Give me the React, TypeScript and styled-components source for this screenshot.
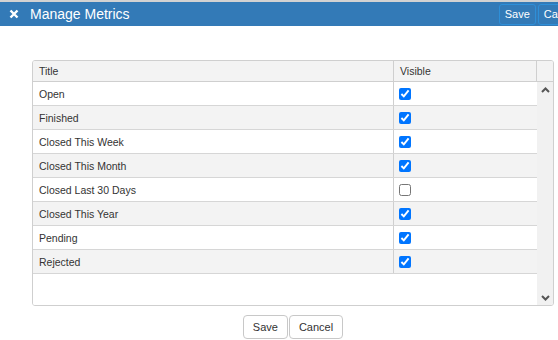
import React from 'react';
import styled, { createGlobalStyle } from 'styled-components';

const GlobalStyle = createGlobalStyle`
  html, body {
    margin: 0;
    padding: 0;
    background: #fff;
  }
  body {
    font-family: "Liberation Sans", Arial, sans-serif;
    color: #333;
    overflow: hidden;
  }
`;

const Page = styled.div`
  width: 558px;
  height: 340px;
  overflow: hidden;
  border-top: 2px solid #d2d2d2;
  box-sizing: border-box;
`;

const TitleBar = styled.div`
  display: flex;
  align-items: center;
  height: 24px;
  background: #337ab7;
  color: #fff;
  padding-left: 9px;
`;

const CloseIcon = styled.span`
  display: inline-flex;
  width: 10px;
  height: 10px;
  margin-right: 11px;
`;

const TitleText = styled.div`
  flex: 1;
  min-width: 0;
  font-size: 14px;
  line-height: 24px;
  white-space: nowrap;
`;

const HeaderActions = styled.div`
  display: flex;
  gap: 2px;
  flex-shrink: 0;
  margin-right: -26px;
`;

const HeaderButton = styled.button`
  font-family: inherit;
  font-size: 11px;
  color: #fff;
  background: #337ab7;
  border: 1px solid #2e8fd8;
  border-radius: 3px;
  height: 21px;
  padding: 0 5px;
  cursor: pointer;
`;

const Content = styled.div`
  width: 522px;
  margin: 34px 0 0 32px;
`;

const Grid = styled.div`
  border: 1px solid #cfcfcf;
  border-radius: 3px;
  overflow: hidden;
  font-size: 10.5px;
`;

const HeaderRow = styled.div`
  display: grid;
  grid-template-columns: 361px 143px 1fr;
  height: 20px;
  background: #f3f3f3;
  border-bottom: 1px solid #cfcfcf;
`;

const HeaderCell = styled.div<{ $last?: boolean }>`
  display: flex;
  align-items: center;
  padding-left: 6px;
  border-right: ${(p) => (p.$last ? 'none' : '1px solid #cfcfcf')};
`;

const Body = styled.div`
  display: flex;
  height: 223px;
`;

const Rows = styled.div`
  flex: 1;
  background: #fff;
`;

const Row = styled.div<{ $alt: boolean }>`
  display: grid;
  grid-template-columns: 361px 1fr;
  height: 23px;
  border-bottom: 1px solid #d6d6d6;
  background: ${(p) => (p.$alt ? '#f3f3f3' : '#fff')};
`;

const Cell = styled.div<{ $divider?: boolean }>`
  display: flex;
  align-items: center;
  padding-left: 6px;
  border-right: ${(p) => (p.$divider ? '1px solid #cfcfcf' : 'none')};
`;

const CheckCell = styled(Cell)`
  padding-left: 5px;
`;

const Check = styled.input`
  margin: 0;
  width: 12px;
  height: 12px;
`;

const Scrollbar = styled.div`
  width: 16px;
  background: #f1f1f1;
  display: flex;
  flex-direction: column;
  justify-content: space-between;
  align-items: center;
  padding: 5px 0 4px;
  box-sizing: border-box;
`;

const Footer = styled.div`
  display: flex;
  justify-content: center;
  gap: 1px;
  margin-top: 9px;
`;

const FooterButton = styled.button`
  font-family: inherit;
  font-size: 11px;
  color: #333;
  background: #fff;
  border: 1px solid #c8c8c8;
  border-radius: 4px;
  height: 24px;
  padding: 0 9px;
  cursor: pointer;
`;

const Chevron = ({ up }: { up?: boolean }) => (
  <svg width="9" height="6" viewBox="0 0 9 6">
    <polyline
      points={up ? '1,5 4.5,1.5 8,5' : '1,1 4.5,4.5 8,1'}
      fill="none"
      stroke="#555"
      strokeWidth="2"
    />
  </svg>
);

const metrics = [
  { title: 'Open', visible: true },
  { title: 'Finished', visible: true },
  { title: 'Closed This Week', visible: true },
  { title: 'Closed This Month', visible: true },
  { title: 'Closed Last 30 Days', visible: false },
  { title: 'Closed This Year', visible: true },
  { title: 'Pending', visible: true },
  { title: 'Rejected', visible: true },
];

export default function App() {
  return (
    <Page>
      <GlobalStyle />
      <TitleBar>
        <CloseIcon>
          <svg width="10" height="10" viewBox="0 0 10 10">
            <path d="M1.5 1.5 L8.5 8.5 M8.5 1.5 L1.5 8.5" stroke="#fff" strokeWidth="2.4" />
          </svg>
        </CloseIcon>
        <TitleText>Manage Metrics</TitleText>
        <HeaderActions>
          <HeaderButton>Save</HeaderButton>
          <HeaderButton>Cancel</HeaderButton>
        </HeaderActions>
      </TitleBar>
      <Content>
        <Grid>
          <HeaderRow>
            <HeaderCell>Title</HeaderCell>
            <HeaderCell>Visible</HeaderCell>
            <HeaderCell $last />
          </HeaderRow>
          <Body>
            <Rows>
              {metrics.map((m, i) => (
                <Row key={m.title} $alt={i % 2 === 1}>
                  <Cell $divider>{m.title}</Cell>
                  <CheckCell>
                    <Check type="checkbox" defaultChecked={m.visible} />
                  </CheckCell>
                </Row>
              ))}
            </Rows>
            <Scrollbar>
              <Chevron up />
              <Chevron />
            </Scrollbar>
          </Body>
        </Grid>
        <Footer>
          <FooterButton>Save</FooterButton>
          <FooterButton>Cancel</FooterButton>
        </Footer>
      </Content>
    </Page>
  );
}
